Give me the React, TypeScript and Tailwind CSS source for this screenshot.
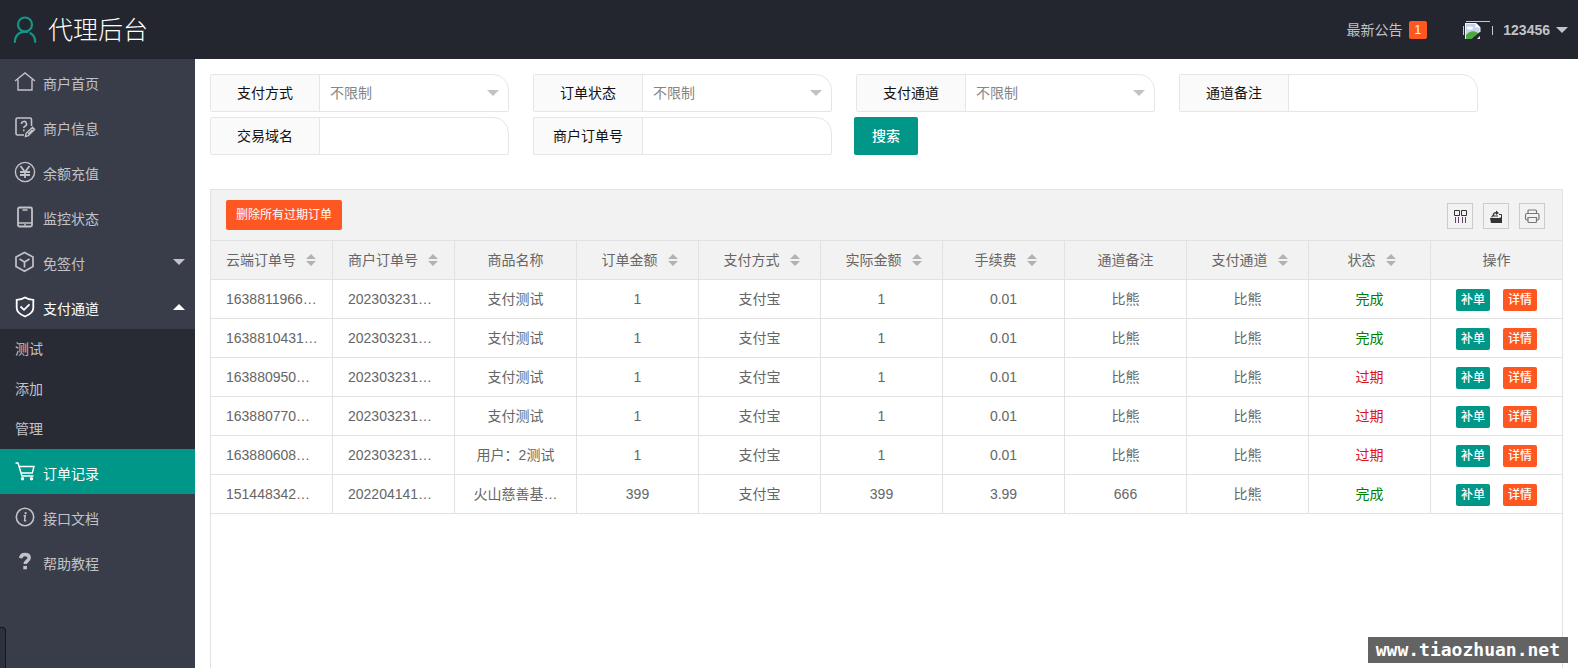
import { ReactNode } from 'react';

const iconProps = {
  width: 22,
  height: 22,
  viewBox: '0 0 22 22',
  fill: 'none',
  stroke: 'currentColor',
  strokeWidth: 1.4,
  'aria-hidden': true,
};

const HomeIcon = () => (
  <svg {...iconProps}>
    <path d="M1 10 11 2l10 8M4 8.5V19h14V8.5" />
  </svg>
);

const InfoEditIcon = () => (
  <svg {...iconProps} strokeWidth={1.6}>
    <path d="M17.5 10V3.5A1.5 1.5 0 0 0 16 2H3.500A1.5 1.5 0 0 0 2 3.500v14A1.5 1.5 0 0 0 3.500 19H10" />
    <path d="M7.500 8a2.500 2.500 0 1 1 3.500 2.200c-.8.4-1.200.8-1.200 1.800M9.800 13.500v1.800" />
    <path d="m11.500 20.500.6-3.200 6.500-6 2 2.200-6.300 6.200zM14 18l4.500-4.300" strokeWidth="1.400" />
  </svg>
);

const YenIcon = () => (
  <svg {...iconProps}>
    <circle cx="11" cy="11" r="9.600" />
    <path d="m6.500 5 4.500 6 4.500-6M11 11v6M6 11h10M6 14h10" strokeWidth="1.800" />
  </svg>
);

const PhoneIcon = () => (
  <svg {...iconProps}>
    <rect x="4" y="1.500" width="14" height="19" rx="1.500" strokeWidth="1.800" />
    <path d="M4 17h14M8.500 4h5" />
    <path d="M10 18.900h2" />
  </svg>
);

const CubeIcon = () => (
  <svg {...iconProps} strokeWidth={1.7}>
    <path d="M10.500 1.500 19 6v9.500l-8.500 4.700L2 15.500V6zM5.500 8l5 3 5-3M10.500 11v5.500" />
  </svg>
);

const ShieldIcon = () => (
  <svg {...iconProps} strokeWidth={1.8}>
    <path d="M11 1.500c2.500 1.600 5 2.200 8.300 2.300V12c0 4-3.500 6.500-8.300 8.500C6.200 18.500 2.700 16 2.700 12V3.800C6 3.700 8.500 3.100 11 1.500z" />
    <path d="m6.500 10.500 3.500 3.300 5.500-5.500" />
  </svg>
);

const CartIcon = () => (
  <svg {...iconProps}>
    <path d="M1.500 2h2.500l4 13h11.500M5.200 5.500h14.800l-1.700 6.500H7.200" />
    <circle cx="8.500" cy="17.700" r="1" />
    <circle cx="17.500" cy="17.700" r="1" />
  </svg>
);

const AboutIcon = () => (
  <svg {...iconProps}>
    <circle cx="11" cy="11" r="8.700" strokeWidth="1.600" />
    <path d="M11.600 6.200v2" strokeWidth="2" />
    <path d="M9.600 9.700h1.600l-.6 5h1.600" strokeWidth="1.500" />
  </svg>
);

const HelpIcon = () => (
  <svg {...iconProps} strokeWidth={3.4}>
    <path d="M6.700 7.300C7 4.500 8.600 3.500 11 3.500c2.600 0 4.200 1.300 4.200 3.300 0 3-4 3-4 6.200" />
    <path d="M9.300 16.600h3.600" />
  </svg>
);

const Caret = ({ up = false, className = '' }: { up?: boolean; className?: string }) => (
  <svg width="12" height="6" viewBox="0 0 12 6" fill="currentColor" className={className} aria-hidden="true">
    <path d={up ? 'M6 0l6 6H0z' : 'M0 0h12L6 6z'} />
  </svg>
);

interface NavItem {
  label: string;
  icon: ReactNode;
  open?: boolean;
  active?: boolean;
  children?: string[];
}

const navItems: NavItem[] = [
  { label: '商户首页', icon: <HomeIcon /> },
  { label: '商户信息', icon: <InfoEditIcon /> },
  { label: '余额充值', icon: <YenIcon /> },
  { label: '监控状态', icon: <PhoneIcon /> },
  { label: '免签付', icon: <CubeIcon />, children: [] },
  { label: '支付通道', icon: <ShieldIcon />, open: true, children: ['测试', '添加', '管理'] },
  { label: '订单记录', icon: <CartIcon />, active: true },
  { label: '接口文档', icon: <AboutIcon /> },
  { label: '帮助教程', icon: <HelpIcon /> },
];

const filters = [
  { id: 'pay-type', label: '支付方式', select: true },
  { id: 'order-status', label: '订单状态', select: true },
  { id: 'channel', label: '支付通道', select: true },
  { id: 'channel-note', label: '通道备注', select: false },
  { id: 'domain', label: '交易域名', select: false },
  { id: 'merchant-order', label: '商户订单号', select: false },
];

const columns = [
  { title: '云端订单号', sort: true },
  { title: '商户订单号', sort: true },
  { title: '商品名称', sort: false },
  { title: '订单金额', sort: true },
  { title: '支付方式', sort: true },
  { title: '实际金额', sort: true },
  { title: '手续费', sort: true },
  { title: '通道备注', sort: false },
  { title: '支付通道', sort: true },
  { title: '状态', sort: true },
];

const orders = [
  ['1638811966…', '202303231…', '支付测试', '1', '支付宝', '1', '0.01', '比熊', '比熊', '完成'],
  ['1638810431…', '202303231…', '支付测试', '1', '支付宝', '1', '0.01', '比熊', '比熊', '完成'],
  ['163880950…', '202303231…', '支付测试', '1', '支付宝', '1', '0.01', '比熊', '比熊', '过期'],
  ['163880770…', '202303231…', '支付测试', '1', '支付宝', '1', '0.01', '比熊', '比熊', '过期'],
  ['163880608…', '202303231…', '用户：2测试', '1', '支付宝', '1', '0.01', '比熊', '比熊', '过期'],
  ['151448342…', '202204141…', '火山慈善基…', '399', '支付宝', '399', '3.99', '666', '比熊', '完成'],
];

function Header() {
  return (
    <header className="flex h-[59px] shrink-0 items-center justify-between bg-[#23262e] pr-2.5 pl-3">
      <div className="flex items-center gap-2.5 text-white">
        <svg width="26" height="28" viewBox="0 0 26 28" fill="none" stroke="#159588" strokeWidth="2.2" strokeLinecap="round" aria-hidden="true">
          <circle cx="13" cy="8.500" r="7" />
          <path d="M15.500 15.800C8 14.500 3 19 2.800 26M18.500 17.200c3 1.600 4.700 5 4.700 8.800" />
        </svg>
        <h1 className="text-[25px] leading-8 font-light">代理后台</h1>
      </div>
      <div className="flex items-center text-[#c2c3c6]">
        <a href="#notice" className="flex items-center gap-1.5">
          最新公告
          <span className="rounded-xs bg-[#ff5722] px-1.5 text-xs leading-[18px] text-white">1</span>
        </a>
        <button type="button" className="ml-9 flex items-center font-bold">
          <svg width="30" height="30" viewBox="0 0 30 30" className="mr-2.5" aria-hidden="true">
            <path d="M3 6.500h24M.5 11v9M29.500 11v9" stroke="#c8c8c8" fill="none" />
            <path d="M2 8h11l4 4v12H2z" fill="#c3d5ee" />
            <ellipse cx="7" cy="13" rx="3" ry="1.500" fill="#fff" />
            <path d="M2 21c3-4 8-6 11-4l4 2v5H2z" fill="#4fa83d" />
            <path d="m8 24.500 9.500-8v4l-4 4z" fill="#23262e" />
            <path d="M2.500 24V8.500H13l4 4V17" stroke="#f4f4f4" fill="none" />
            <path d="M12.500 8v4.500H17z" fill="#fff" />
            <path d="M14 24h3v-3z" fill="#ddd" />
          </svg>
          123456
          <Caret className="ml-1.5" />
        </button>
      </div>
    </header>
  );
}

function Sidebar() {
  return (
    <nav className="relative w-[195px] shrink-0 bg-[#393d49] text-[#c2c3c8]">
      <ul>
        {navItems.map((item) => (
          <li key={item.label}>
            <a
              href="#nav"
              className={`flex h-[45px] items-center pr-2.5 pl-3.5 ${item.active ? 'bg-[#009688] text-white' : ''} ${item.open ? 'text-white' : ''}`}
            >
              {item.icon}
              <span className="mt-1 ml-[7px] flex-1">{item.label}</span>
              {item.children && <Caret up={item.open} />}
            </a>
            {item.open && (
              <ul className="bg-[#282b33]">
                {item.children?.map((child) => (
                  <li key={child}>
                    <a href="#sub" className="flex h-10 items-center px-[15px]">{child}</a>
                  </li>
                ))}
              </ul>
            )}
          </li>
        ))}
      </ul>
      <div className="absolute bottom-0 left-0 h-[41px] w-1.5 rounded-tr-sm border-t border-r border-[#14161c] bg-[#2c313d]" />
    </nav>
  );
}

function Filters() {
  return (
    <form className="flex flex-wrap gap-x-6 gap-y-[5px]">
      {filters.map((f) => (
        <div key={f.id} className="flex h-[38px] w-[299px] rounded-l-xs rounded-tr-2xl rounded-br-xs border border-[#e6e6e6] bg-white">
          <label htmlFor={f.id} className="flex w-[109px] items-center justify-center border-r border-[#e6e6e6] bg-[#fafafa] text-[#111]">
            {f.label}
          </label>
          {f.select ? (
            <div className="relative flex flex-1 items-center">
              <select id={f.id} className="h-full w-full appearance-none bg-transparent pl-2.5 text-[#858585] outline-none">
                <option>不限制</option>
              </select>
              <Caret className="pointer-events-none absolute right-[9px] text-[#c2c2c2]" />
            </div>
          ) : (
            <input id={f.id} type="text" className="w-0 flex-1 bg-transparent px-2.5 outline-none" />
          )}
        </div>
      ))}
      <button type="button" className="-ml-0.5 h-[38px] w-16 rounded-xs bg-[#009688] font-medium text-white">
        搜索
      </button>
    </form>
  );
}

function Toolbar() {
  const tool = 'flex size-[26px] items-center justify-center border border-[#ccc] text-[#333]';
  return (
    <div className="flex h-[50px] items-center justify-between bg-[#f2f2f2] pr-[17px] pl-[15px]">
      <button type="button" className="h-[30px] rounded-xs bg-[#ff5722] px-2.5 text-xs text-white">
        删除所有过期订单
      </button>
      <div className="flex gap-2.5 pt-0.5">
        <button type="button" aria-label="筛选列" className={tool}>
          <svg width="16" height="16" viewBox="0 0 16 16" fill="none" stroke="currentColor" aria-hidden="true">
            <path d="M2.500 2.500h5v5h-5zM9.500 2.500h5v5h-5z" />
            <path d="M3.500 9v6M6.500 9v6M10.500 9v6M13.500 9v6" stroke="#5b4468" />
          </svg>
        </button>
        <button type="button" aria-label="导出" className={tool}>
          <svg width="16" height="16" viewBox="0 0 16 16" fill="currentColor" aria-hidden="true">
            <path d="M2 10h9l3-1v6H3z" />
            <path d="M13.500 15V6.500H11M4 9.500V8h6" stroke="currentColor" fill="none" />
            <path d="M8 2.500 11 5 8 7V5.500C6.500 5.500 6 6 6 8H4.500C4.500 5.500 6 4 8 4z" />
          </svg>
        </button>
        <button type="button" aria-label="打印" className={tool}>
          <svg width="16" height="16" viewBox="0 0 16 16" fill="none" stroke="#777" strokeWidth="1.200" aria-hidden="true">
            <path d="M4 5.500V3a1 1 0 0 1 1-1h6.500a1 1 0 0 1 1 1v2.500M4 12H3a1.500 1.500 0 0 1-1.500-1.500V7A1.500 1.500 0 0 1 3 5.500h10.500A1.500 1.500 0 0 1 15 7v3.500a1.500 1.500 0 0 1-1.500 1.500h-1M4 9.500h8.500v4a1 1 0 0 1-1 1H5a1 1 0 0 1-1-1z" />
          </svg>
        </button>
      </div>
    </div>
  );
}

function OrderTable() {
  const cell = 'border-r border-b border-[#e2e2e2] pl-[15px] font-normal whitespace-nowrap';
  return (
    <table className="w-full table-fixed border-separate border-spacing-0 border-t border-[#e2e2e2] text-[#666]">
      <thead>
        <tr className="h-[39px] bg-[#f2f2f2]">
          {columns.map((col, i) => (
            <th key={col.title} className={`w-[122px] ${cell} ${col.sort ? 'pr-[11px]' : 'pr-[15px]'} ${i < 2 ? 'text-left' : 'text-center'}`}>
              {col.title}
              {col.sort && (
                <svg width="10" height="12" viewBox="0 0 10 12" fill="#b2b2b2" className="ml-2.5 inline-block align-[-1px]" aria-hidden="true">
                  <path d="M5 0l5 5H0zM0 7h10l-5 5z" />
                </svg>
              )}
            </th>
          ))}
          <th className={`${cell} border-r-0 pr-[15px]`}>操作</th>
        </tr>
      </thead>
      <tbody>
        {orders.map((row) => (
          <tr key={row[0]} className="h-[39px]">
            {row.map((value, i) => (
              <td key={i} className={`${cell} pr-[15px] ${i < 2 ? 'text-left' : 'text-center'}`}>
                {i === 9 ? (
                  <span className={value === '完成' ? 'text-[#008000]' : 'text-[#d9161b]'}>{value}</span>
                ) : (
                  value
                )}
              </td>
            ))}
            <td className={`${cell} border-r-0 pr-[15px]`}>
              <div className="flex justify-center gap-[13px] pt-0.5 text-xs font-medium text-white">
                <button type="button" className="h-[22px] rounded-xs bg-[#009688] px-[5px]">补单</button>
                <button type="button" className="h-[22px] rounded-xs bg-[#ff5722] px-[5px]">详情</button>
              </div>
            </td>
          </tr>
        ))}
      </tbody>
    </table>
  );
}

export default function App() {
  return (
    <div className="flex min-h-screen flex-col bg-white font-['Liberation_Sans','Noto_Sans_CJK_SC',sans-serif] text-sm">
      <Header />
      <div className="flex flex-1">
        <Sidebar />
        <main className="flex min-w-0 flex-1 flex-col px-[15px] pt-[15px]">
          <Filters />
          <section className="mt-[34px] flex-1 border border-b-0 border-[#e2e2e2]">
            <Toolbar />
            <OrderTable />
          </section>
        </main>
      </div>
      <div className="fixed right-2.5 bottom-[5px] bg-[#636363] px-2 font-['DejaVu_Sans_Mono',monospace] text-lg leading-[26px] font-bold text-white">
        www.tiaozhuan.net
      </div>
    </div>
  );
}
